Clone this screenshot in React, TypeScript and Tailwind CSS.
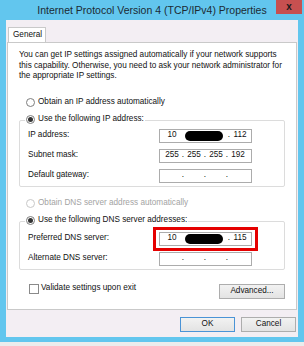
import type { ReactNode } from 'react';

const FONT = "font-['Liberation_Sans',Arial,sans-serif]";

function Radio({ checked, disabled, label }: { checked?: boolean; disabled?: boolean; label: string }) {
  return (
    <div className="flex h-[13px] items-center gap-[3px]">
      <span
        className={`flex h-[9px] w-[9px] items-center justify-center rounded-full border bg-white ${
          disabled ? 'border-[#c8c8c8]' : 'border-[#7d7d7d]'
        }`}
      >
        {checked && <span className="h-[5px] w-[5px] rounded-full bg-[#333]" />}
      </span>
      <span className={disabled ? 'text-[#a3a3a3]' : 'text-[#111]'}>{label}</span>
    </div>
  );
}

function Octet({ value }: { value?: string }) {
  return <span className="w-[18px] text-center">{value ?? ''}</span>;
}

function Dot() {
  return <span className="w-[4px] text-center">.</span>;
}

// IP edit control; masked = first and last octet visible, the middle blacked out
function IpField({ octets, masked }: { octets?: string[]; masked?: boolean }) {
  return (
    <div className="flex h-[14px] w-[93px] items-center border border-[#acacac] bg-white pl-[3px] text-[#111]">
      {masked ? (
        <>
          <Octet value={octets?.[0]} />
          <span className="ml-[4px] h-[10px] w-[38px] rounded-full bg-black" />
          <span className="ml-[4px] w-[4px] text-center">.</span>
          <Octet value={octets?.[3]} />
        </>
      ) : (
        <>
          <Octet value={octets?.[0]} />
          <Dot />
          <Octet value={octets?.[1]} />
          <Dot />
          <Octet value={octets?.[2]} />
          <Dot />
          <Octet value={octets?.[3]} />
        </>
      )}
    </div>
  );
}

function Row({ label, children }: { label: string; children: ReactNode }) {
  return (
    <div className="flex h-[14px] items-center">
      <span className="w-[131px] text-[#111]">{label}</span>
      {children}
    </div>
  );
}

function Button({ label, primary, className = '' }: { label: string; primary?: boolean; className?: string }) {
  return (
    <div
      className={`flex h-[15px] items-center justify-center border bg-gradient-to-b from-[#f2f2f2] to-[#e3e3e3] text-[#111] ${
        primary ? 'border-[#4a93d6]' : 'border-[#adadad]'
      } ${className}`}
    >
      {label}
    </div>
  );
}

export default function App() {
  return (
    <div className={`${FONT} flex h-[346px] w-[304px] flex-col bg-[#62c6ee] text-[8.2px] leading-none`}>
      {/* title bar */}
      <div className="relative flex h-[20px] items-center justify-center">
        <span className="text-[10.5px] text-[#1c2a33]">Internet Protocol Version 4 (TCP/IPv4) Properties</span>
        <div className="absolute right-[2px] top-0 flex h-[14px] w-[26px] items-center justify-center bg-[#c75050] text-[10px] font-bold text-[#1a1a1a]">
          x
        </div>
      </div>

      {/* client area */}
      <div className="ml-[6px] flex h-[317px] w-[292px] flex-col bg-[#f3eef3]">
        <div className="mt-[7px] ml-[2px] flex h-[15px] w-[38px] items-center border border-b-0 border-[#c9c9c9] bg-white pl-[4px] text-[#111]">
          General
        </div>

        <div className="mx-[1px] flex h-[268px] flex-col border border-[#c9c9c9] bg-white pl-[11px] pr-[11px]">
          <p className="mt-[7px] leading-[10.5px] text-[#111]">
            You can get IP settings assigned automatically if your network supports this capability. Otherwise, you need to ask your network administrator for the appropriate IP settings.
          </p>

          <div className="ml-[7px] mt-[14px]">
            <Radio label="Obtain an IP address automatically" />
          </div>

          <div className="mt-[11px] rounded-[2px] border border-[#dcdcdc] pb-[3px]">
            <div className="-mt-[8px] ml-[5px] w-fit bg-white px-[1px]">
              <Radio checked label="Use the following IP address:" />
            </div>
            <div className="mt-[3px] flex flex-col gap-[6px] pl-[8px]">
              <Row label="IP address:">
                <IpField masked octets={['10', '', '', '112']} />
              </Row>
              <Row label="Subnet mask:">
                <IpField octets={['255', '255', '255', '192']} />
              </Row>
              <Row label="Default gateway:">
                <IpField />
              </Row>
            </div>
          </div>

          <div className="ml-[7px] mt-[10px]">
            <Radio disabled label="Obtain DNS server address automatically" />
          </div>

          <div className="mt-[11px] rounded-[2px] border border-[#dcdcdc] pb-[3px]">
            <div className="-mt-[8px] ml-[5px] w-fit bg-white px-[1px]">
              <Radio checked label="Use the following DNS server addresses:" />
            </div>
            <div className="mt-[5px] flex flex-col gap-[6px] pl-[8px]">
              <Row label="Preferred DNS server:">
                <div className="-mx-[6px] -my-[5px] border-[3px] border-[#e50000] px-[3px] py-[2px]">
                  <IpField masked octets={['10', '', '', '115']} />
                </div>
              </Row>
              <Row label="Alternate DNS server:">
                <IpField />
              </Row>
            </div>
          </div>

          <div className="mt-[14px] flex items-start justify-between">
            <div className="ml-[10px] flex h-[10px] items-center gap-[2px]">
              <span className="h-[10px] w-[10px] border border-[#8a8a8a] bg-white" />
              <span className="text-[#111]">Validate settings upon exit</span>
            </div>
            <Button label="Advanced..." className="w-[66px]" />
          </div>
        </div>

        <div className="mt-[7px] flex justify-end gap-[6px] pr-[2px]">
          <Button primary label="OK" className="w-[55px]" />
          <Button label="Cancel" className="w-[55px]" />
        </div>
      </div>

      <div className="mt-[5px] h-[4px] bg-[#ececec]" />
    </div>
  );
}
